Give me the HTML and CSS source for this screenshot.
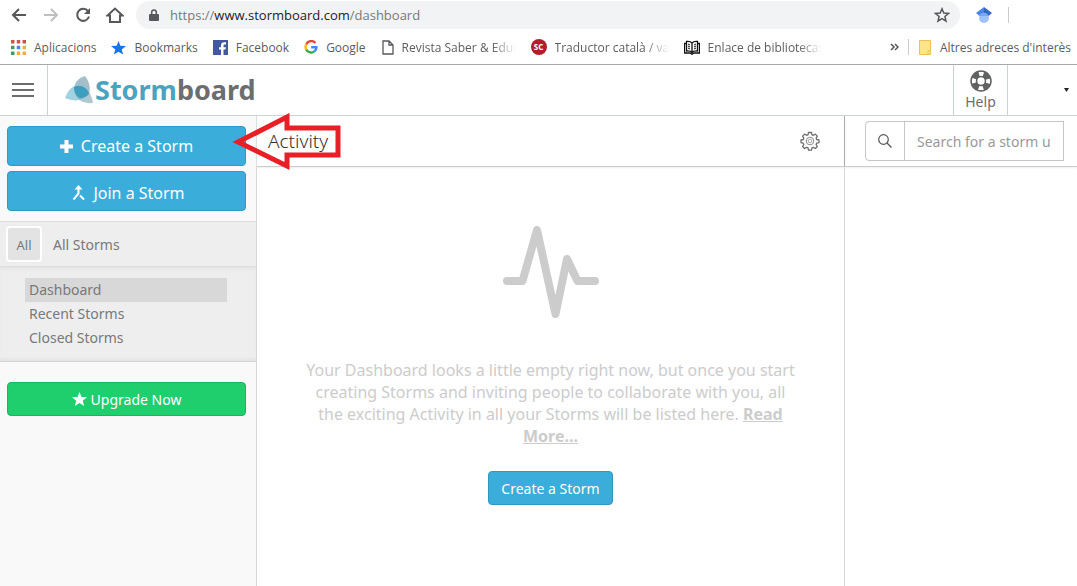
FILE: index.html
```html
<!DOCTYPE html>
<html lang="en">
<head>
    <meta charset="UTF-8">
    <meta name="viewport" content="width=device-width, initial-scale=1.0">
    <title>Stormboard</title>
    <link rel="stylesheet" href="styles.css">
</head>

<body>
    <div class="browser">
        <div class="toolbar">
            <button class="nav-button" aria-label="Back">
                <svg width="16" height="16" viewBox="0 0 16 16" fill="none" stroke="#55585c" stroke-width="2"><path d="M15 8H2M8 2L2 8l6 6"/></svg>
            </button>
            <button class="nav-button" aria-label="Forward">
                <svg width="16" height="16" viewBox="0 0 16 16" fill="none" stroke="#bdbfc1" stroke-width="2"><path d="M1 8h13M8 2l6 6-6 6"/></svg>
            </button>
            <button class="nav-button" aria-label="Reload">
                <svg width="16" height="16" viewBox="0 0 16 16" fill="none" stroke="#55585c" stroke-width="2"><path d="M13 4.2A6 6 0 1 0 14 9.500"/><path d="M15 1v6H9z" fill="#55585c" stroke="none"/></svg>
            </button>
            <button class="nav-button" aria-label="Home">
                <svg width="18" height="16" viewBox="0 0 18 16" fill="none" stroke="#55585c" stroke-width="2"><path d="M1.500 8.500L9 1.500l7.500 7H14V15H4V8.500z"/></svg>
            </button>
            <div class="address">
                <svg width="10" height="13" viewBox="0 0 10 13"><path d="M1 5h8a1 1 0 0 1 1 1v5a1 1 0 0 1-1 1H1a1 1 0 0 1-1-1V6a1 1 0 0 1 1-1z" fill="#55585c"/><path d="M2.700 5.500V3.200a2.300 2.300 0 0 1 4.600 0v2.300" fill="none" stroke="#55585c" stroke-width="1.500"/></svg>
                <span class="url">https://<b>www.stormboard.com</b>/dashboard</span>
                <svg width="16" height="16" viewBox="0 0 16 16" fill="none" stroke="#55585c" stroke-width="1.500"><path d="M8 1.800l1.800 4.300 4.700.4-3.600 3 1.100 4.600L8 11.700l-4 2.400 1.100-4.600-3.600-3 4.700-.4z"/></svg>
            </div>
            <svg class="scholar" width="16" height="16" viewBox="0 0 16 16"><path d="M0 6l8-6v9H3.500z" fill="#4a86e8"/><path d="M16 6L8 0v9h4.500z" fill="#3567c4"/><circle cx="8" cy="11" r="5" fill="#a0c3ff"/><path d="M3.500 9a5 5 0 0 1 9 0z" fill="#76a7fa"/></svg>
            <span class="divider"></span>
        </div>

        <nav class="bookmarks">
            <a href="#" class="bookmark">
                <svg width="15" height="15" viewBox="0 0 13 13"><path d="M0 0h3v3H0zM5 0h3v3H5zM10 0h3v3h-3z" fill="#d64f42"/><path d="M0 5h3v3H0z" fill="#3f9d5c"/><path d="M5 5h3v3H5z" fill="#4285f4"/><path d="M10 5h3v3h-3zM5 10h3v3H5zM10 10h3v3h-3z" fill="#edb03c"/><path d="M0 10h3v3H0z" fill="#3f9d5c"/></svg>
                <span>Aplicacions</span>
            </a>
            <a href="#" class="bookmark">
                <svg width="15" height="15" viewBox="0 0 16 16"><path d="M8 1l2 5 6 .4-4.600 3.700L13 15.500l-5-3-5 3 1.600-5.400L0 6.400 6 6z" fill="#1a73e8"/></svg>
                <span>Bookmarks</span>
            </a>
            <a href="#" class="bookmark">
                <svg width="15" height="15" viewBox="0 0 15 15"><path d="M0 0h15v15H0z" fill="#4059a0"/><path d="M8 15V9.500H6V7.200h2V5.500C8 3.400 9.200 2.300 11.200 2.300H13v2.300h-1.200c-1 0-1.300.4-1.300 1.200v1.400h2.400l-.4 2.300h-2V15z" fill="#fff"/></svg>
                <span>Facebook</span>
            </a>
            <a href="#" class="bookmark">
                <svg width="14" height="14" viewBox="0 0 16 16" fill="none" stroke-width="2.800"><path d="M13 3.400A6.200 6.200 0 0 0 2.600 5" stroke="#ea4335"/><path d="M2.600 5a6.200 6.200 0 0 0 0 6" stroke="#fbbc05"/><path d="M2.600 11a6.200 6.200 0 0 0 9.300 2" stroke="#34a853"/><path d="M11.900 13A6 6 0 0 0 14.200 8.200H8.200" stroke="#4285f4"/></svg>
                <span>Google</span>
            </a>
            <a href="#" class="bookmark">
                <svg width="13" height="15" viewBox="0 0 13 15" fill="none" stroke="#55585c" stroke-width="1.300"><path d="M2 1h6l4 4v9H2zM8 1v4h4"/></svg>
                <span class="fade">Revista Saber &amp; Educ</span>
            </a>
            <a href="#" class="bookmark">
                <span class="sc-badge">SC</span>
                <span class="fade">Traductor català / vale</span>
            </a>
            <a href="#" class="bookmark">
                <svg width="16" height="15" viewBox="0 0 16 15" fill="none" stroke="#111"><path d="M8 3C6.500 1.300 4.500 1.300 2.500 1.500v9.500C5 10.800 6.800 11 8 12.500 9.200 11 11 10.800 13.500 11V1.500C11.500 1.300 9.500 1.300 8 3zM8 3v9.500" stroke-width="1.300"/><path d="M2.500 3.500h-2V13H6l2 1.300L10 13h5.500V3.500h-2" stroke-width="1.300"/><path d="M4 4l2 1M4 6l2 1M4 8l2 1M12 4l-2 1M12 6l-2 1M12 8l-2 1"/></svg>
                <span class="fade">Enlace de bibliotecas</span>
            </a>
            <button class="more" aria-label="More bookmarks">
                <svg width="9" height="8" viewBox="0 0 9 8" fill="none" stroke="#55585c" stroke-width="1.500"><path d="M1 1l3 3-3 3M5 1l3 3-3 3"/></svg>
            </button>
            <span class="divider"></span>
            <a href="#" class="bookmark">
                <svg width="14" height="15" viewBox="0 0 14 15"><path d="M1.500.5h11v10l-2 4h-9z" fill="#ffe48a" stroke="#e9c25a"/><path d="M10 14.500V11l2.500-.5v4z" fill="#ffe48a" stroke="#e9c25a"/></svg>
                <span>Altres adreces d'interès</span>
            </a>
        </nav>
    </div>

    <header class="header">
        <button class="menu-button" aria-label="Menu">
            <svg width="22" height="14" viewBox="0 0 22 14"><path d="M0 1h22M0 7h22M0 13h22" stroke="#6b6d6f" stroke-width="2"/></svg>
        </button>
        <a href="#" class="logo">
            <svg width="28" height="28" viewBox="0 0 28 28">
                <path d="M20 0c4 5 6 12 4 18-6 2-12 1-15-4C9 7 13 2 20 0z" fill="#a4bfc9"/>
                <path d="M0 22C3 14 8 9 14 9c6 1 10 5 9 10-5 6-14 7-23 3z" fill="#8ecbdc" fill-opacity=".85"/>
                <path d="M9 11c8-3 17 2 19 16-9 1-19-3-19-16z" fill="#7fa3b2" fill-opacity=".6"/>
                <path d="M9 11c6-3 13 0 15 7-4 4-9 5-11 3-3-3-4-6-4-10z" fill="#3f9dbd"/>
            </svg>
            <span class="logo-text"><span class="storm">Storm</span>board</span>
        </a>
        <a href="#" class="help">
            <svg width="22" height="22" viewBox="0 0 22 22">
                <circle cx="11" cy="11" r="7" fill="none" stroke="#5f6163" stroke-width="6"/>
                <circle cx="11" cy="11" r="7" fill="none" stroke="#fff" stroke-width="5" stroke-dasharray="4.400 6.600" stroke-dashoffset="2.200"/>
                <circle cx="11" cy="11" r="10" fill="none" stroke="#5f6163" stroke-width="1.500"/>
                <circle cx="11" cy="11" r="4.500" fill="none" stroke="#5f6163" stroke-width="1.500"/>
            </svg>
            <span>Help</span>
        </a>
        <button class="account" aria-label="Account">
            <svg width="5" height="4" viewBox="0 0 5 4"><path d="M0 0h5L2.500 4z" fill="#222"/></svg>
        </button>
    </header>

    <div class="app">
        <aside class="sidebar">
            <div class="actions">
                <button class="btn btn-large">
                    <svg width="13" height="13" viewBox="0 0 13 13"><path d="M6.500 0v13M0 6.500h13" stroke="#fff" stroke-width="4"/></svg>
                    Create a Storm
                </button>
                <button class="btn btn-large btn-join">
                    <svg width="13" height="16" viewBox="0 0 13 16" fill="none" stroke="#fff" stroke-width="2"><path d="M6.500 3v5.500L1.500 14.500M8 10.500l4 4"/><path d="M6.500 0l4 4.500h-8z" fill="#fff" stroke="none"/></svg>
                    Join a Storm
                </button>
            </div>
            <a href="#" class="all-storms">
                <span class="all-box">All</span>
                <span>All Storms</span>
            </a>
            <nav class="storm-list">
                <a href="#" class="active">Dashboard</a>
                <a href="#">Recent Storms</a>
                <a href="#">Closed Storms</a>
            </nav>
            <button class="btn btn-upgrade">
                <svg width="15" height="14" viewBox="0 0 15 14"><path d="M7.500 0l2 5 5.500.3-4.300 3.400 1.500 5.300-4.700-3-4.700 3 1.500-5.300L0 5.300 5.500 5z" fill="#fff"/></svg>
                Upgrade Now
            </button>
        </aside>

        <main class="main">
            <div class="panel-head">
                <h1>Activity</h1>
                <button class="settings" aria-label="Settings">
                    <svg width="20" height="20" viewBox="0 0 20 20" fill="none" stroke="#6b6d6f" stroke-linejoin="round">
                        <path d="M8.500 1.500h3l.5 2.300 1.300.5 2-1.200 2 2-1.200 2 .6 1.400 2.300.5v2.600l-2.300.6-.6 1.300 1.200 2-2 2-2-1.200-1.300.6-.5 2.300h-3L8 16.900l-1.400-.6-2 1.200-2-2 1.200-2-.6-1.300L1 11.600V9l2.300-.5.5-1.400-1.200-2 2-2 2 1.200L8 3.800z" stroke-width="1.300"/>
                        <circle cx="10" cy="10" r="3.800" stroke="#8a8c8e"/><circle cx="10" cy="10" r="1.800" stroke="#a5a7a9"/>
                    </svg>
                </button>
            </div>
            <div class="empty">
                <svg width="98" height="94" viewBox="0 0 98 94" fill="none" stroke="#ccc" stroke-width="8" stroke-linecap="round" stroke-linejoin="round"><path d="M5 56h15.500L35 5l18.500 84L65 34l10.500 22H93"/></svg>
                <p>Your Dashboard looks a little empty right now, but once you start creating Storms and inviting people to collaborate with you, all the exciting Activity in all your Storms will be listed here. <a href="#">Read More...</a></p>
                <button class="btn btn-small">Create a Storm</button>
            </div>
            <!-- arrow pointing at the create button -->
            <svg class="arrow" width="110" height="58" viewBox="0 0 110 58" fill="none" stroke="#e81f27" stroke-width="5"><path d="M6 29L55 4v11h51v27H55v11z"/></svg>
        </main>

        <aside class="right">
            <form class="search">
                <button type="button" aria-label="Search">
                    <svg width="14" height="14" viewBox="0 0 14 14" fill="none" stroke="#555" stroke-width="1.200"><circle cx="5.500" cy="5.500" r="4.800"/><path d="M9 9l4.500 4.500"/></svg>
                </button>
                <input type="text" aria-label="Search for a storm" placeholder="Search for a storm using title">
            </form>
        </aside>
    </div>
</body>
</html>
```
FILE: styles.css
```css
* {
    box-sizing: border-box;
}

body {
    margin: 0;
    min-height: 100vh;
    display: flex;
    flex-direction: column;
    font-family: "Noto Sans", "Open Sans", sans-serif;
    font-size: 14px;
    color: #6b6d6f;
    background-color: #fff;
}

button {
    font: inherit;
    color: inherit;
    background: none;
    border: none;
    padding: 0;
    cursor: pointer;
}

a {
    color: inherit;
    text-decoration: none;
}

svg {
    flex-shrink: 0;
}

/* browser bars */
.browser {
    height: 65px;
    border-bottom: 1px solid #a9a9a9;
    font-family: "Open Sans", sans-serif;
    font-size: 12px;
    color: #5a5d61;
}

.toolbar {
    display: flex;
    align-items: center;
    height: 30px;
    padding-left: 11px;
}

.nav-button {
    width: 32px;
    height: 28px;
    display: flex;
    align-items: center;
}

.nav-button:nth-child(4) {
    width: 30px;
    margin-left: -1px;
}

.address {
    flex: 1;
    display: flex;
    align-items: center;
    gap: 11px;
    height: 28px;
    padding: 0 10px 0 13px;
    border-radius: 14px;
    background-color: #f1f3f4;
}

.url {
    flex: 1;
    font-size: 13px;
    color: #777a7e;
}

.url b {
    font-weight: normal;
    color: #222427;
}

.scholar {
    margin: 0 16px;
}

.divider {
    width: 1px;
    height: 16px;
    background-color: #c8cacc;
}

.toolbar .divider {
    margin-right: 68px;
}

.bookmarks {
    display: flex;
    align-items: center;
    height: 34px;
    padding: 0 6px 0 11px;
    gap: 15px;
    white-space: nowrap;
}

.bookmark {
    display: flex;
    align-items: center;
    gap: 8px;
}

.fade {
    width: 114px;
    overflow: hidden;
    mask-image: linear-gradient(to right, #000 90px, transparent);
}

.sc-badge {
    width: 16px;
    height: 16px;
    border-radius: 50%;
    background-color: #b01e2b;
    color: #fff;
    font-size: 8px;
    font-weight: bold;
    line-height: 16px;
    text-align: center;
}

.more {
    display: flex;
    margin-left: auto;
    margin-right: -6px;
}

.bookmarks .divider {
    margin-right: -6px;
}

/* header */
.header {
    display: flex;
    height: 51px;
    border-bottom: 1px solid #ccd1d4;
}

.menu-button {
    width: 48px;
    display: flex;
    align-items: center;
    padding-left: 12px;
    border-right: 1px solid #ccd1d4;
}

.logo {
    display: flex;
    align-items: center;
    gap: 2px;
    margin-left: 17px;
    margin-right: auto;
}

.logo-text {
    font-size: 27px;
    font-weight: bold;
    line-height: 36px;
}

.storm {
    color: #4ba3c0;
}

.help {
    width: 55px;
    display: flex;
    flex-direction: column;
    align-items: center;
    padding-top: 5px;
    line-height: 20px;
    border-left: 1px solid #ccd1d4;
    border-right: 1px solid #ccd1d4;
}

.account {
    width: 69px;
    padding-right: 8px;
    display: flex;
    align-items: center;
    justify-content: flex-end;
}

/* three columns */
.app {
    flex: 1;
    display: grid;
    grid-template-columns: 257px 1fr 232px;
}

.sidebar {
    background-color: #f9f9f9;
    border-right: 1px solid #d5d7d8;
}

.actions {
    display: grid;
    gap: 5px;
    padding: 10px 10px 10px 7px;
}

.btn {
    display: flex;
    align-items: center;
    justify-content: center;
    gap: 8px;
    height: 34px;
    color: #fff;
    background-color: #3badda;
    border: 1px solid #3198c2;
    border-radius: 4px;
}

.btn-large {
    height: 40px;
    font-size: 16px;
}

.btn-join {
    padding: 4px 0 0 4px;
}

.all-storms {
    display: flex;
    align-items: center;
    gap: 11px;
    height: 46px;
    padding: 0 6px;
    background-color: #eee;
    border-top: 1px solid #ddd;
    border-bottom: 1px solid #ddd;
    color: #77797b;
}

.all-box {
    width: 36px;
    height: 36px;
    line-height: 34px;
    text-align: center;
    font-size: 13px;
    background-color: #e3e3e3;
    border: 2px solid #fff;
    border-radius: 4px;
}

.storm-list {
    display: flex;
    flex-direction: column;
    height: 95px;
    padding: 11px 29px 0 25px;
    background-color: #eee;
    border-bottom: 1px solid #d5d5d5;
    box-shadow: inset 0 4px 4px -3px #ddd, inset 0 -4px 4px -3px #ddd;
    color: #77797b;
}

.storm-list a {
    line-height: 24px;
    padding-left: 4px;
}

.storm-list .active {
    background-color: #d8d8d8;
}

.btn-upgrade {
    width: calc(100% - 17px);
    margin: 20px 10px 0 7px;
    gap: 4px;
    background-color: #1fce6d;
    border-color: #1bb45f;
}

.main {
    position: relative;
    border-right: 1px solid #d5d7d8;
}

.panel-head {
    display: flex;
    align-items: center;
    justify-content: space-between;
    height: 51px;
    margin-right: -1px;
    padding: 0 24px 0 11px;
    border-right: 1px solid #a9adb0;
    border-bottom: 1px solid #ccc;
    box-shadow: 0 1px 2px #eee;
}

.panel-head h1 {
    margin: 0;
    font-size: 19px;
    font-weight: 300;
    color: #333;
}

.settings {
    display: flex;
}

.empty {
    display: flex;
    flex-direction: column;
    align-items: center;
    padding: 58px 46px 0;
}

.empty p {
    max-width: 492px;
    margin: 40px 0 24px;
    font-size: 16px;
    line-height: 22px;
    text-align: center;
    color: #ccc;
}

.empty p a {
    font-weight: bold;
    text-decoration: underline;
}

.btn-small {
    padding: 0 12px;
}

.arrow {
    position: absolute;
    top: -3px;
    left: -25px;
}

.search {
    display: flex;
    height: 51px;
    padding: 5px 13px 5px 20px;
    border-bottom: 1px solid #ccc;
    box-shadow: 0 1px 2px #eee;
}

.search button {
    width: 40px;
    display: flex;
    align-items: center;
    justify-content: center;
    border: 1px solid #c4c6c8;
    border-radius: 4px 0 0 4px;
}

.search input {
    flex: 1;
    min-width: 0;
    margin-left: -1px;
    padding: 0 12px;
    font: inherit;
    border: 1px solid #c4c6c8;
    border-radius: 0;
}

.search input::placeholder {
    color: #999;
}
```
